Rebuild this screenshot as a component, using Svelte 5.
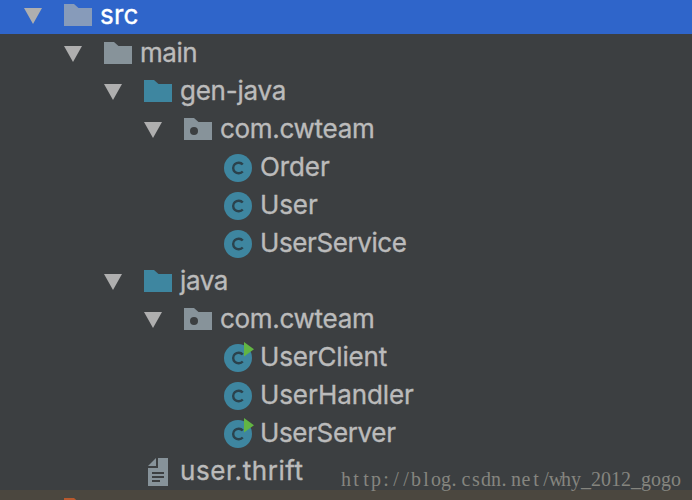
<script>
  const rows = [
    { label: 'src', depth: 0, icon: 'folder', tone: 'selected', open: true, tracking: 0.2 },
    { label: 'main', depth: 1, icon: 'folder', tone: 'plain', open: true, tracking: -0.5 },
    { label: 'gen-java', depth: 2, icon: 'folder', tone: 'source', open: true, tracking: -0.25 },
    { label: 'com.cwteam', depth: 3, icon: 'package', tone: 'plain', open: true, tracking: -0.3 },
    { label: 'Order', depth: 4, icon: 'class', tracking: -0.1 },
    { label: 'User', depth: 4, icon: 'class', tracking: -0.1 },
    { label: 'UserService', depth: 4, icon: 'class', tracking: -0.4 },
    { label: 'java', depth: 2, icon: 'folder', tone: 'source', open: true, tracking: -0.4 },
    { label: 'com.cwteam', depth: 3, icon: 'package', tone: 'plain', open: true, tracking: -0.3 },
    { label: 'UserClient', depth: 4, icon: 'class', runnable: true, tracking: -0.15 },
    { label: 'UserHandler', depth: 4, icon: 'class', tracking: -0.1 },
    { label: 'UserServer', depth: 4, icon: 'class', runnable: true, tracking: -0.35 },
    { label: 'user.thrift', depth: 2, icon: 'file', tracking: 0.55 },
    { label: '', depth: 0, icon: 'folder', tone: 'excluded' }
  ];

  const url = 'http://blog.csdn.net/why_2012_gogo';
  // one 10px cell per character, dots sit at the left of their cell
  const cells = Array.from(url, (c, i) => (c === '.' ? 3 : 5) + i * 10).join(' ');
</script>

<div class="tree">
  {#each rows as row}
    <div
      class="row"
      class:selected={row.tone === 'selected'}
      class:excluded={row.tone === 'excluded'}
      style="padding-left: {24 + row.depth * 40}px"
    >
      <span class="toggle">
        {#if row.open}
          <svg width="18" height="16" viewBox="0 0 18 16"><path d="M0 0H18L9 16Z" fill="#afafaf" /></svg>
        {/if}
      </span>
      <svg class="icon {row.tone}" width="32" height="38" viewBox="0 0 32 38">
        {#if row.icon === 'folder' || row.icon === 'package'}
          <path d="M0 8H10L14.5 12H28V30H0Z" fill="currentColor" />
          {#if row.icon === 'package'}
            <circle cx="10" cy="21" r="4" fill="#3c3f41" />
          {/if}
        {:else if row.icon === 'class'}
          <circle cx="14" cy="20" r="14" fill="#3e86a0" />
          <path d="M18.8 16.5A5.5 5.3 0 1 0 18.8 23.5" fill="none" stroke="#2b424c" stroke-width="2.4" />
          {#if row.runnable}
            <path d="M20 4L30 11.2L20 18.4Z" fill="#62b543" />
          {/if}
        {:else}
          <path d="M12 6V14H4ZM14 6H24V34H4V16H14Z" fill="#87939a" />
          <path d="M8 21H20M8 25H20M8 29H16" stroke="#3c3f41" stroke-width="2" />
        {/if}
      </svg>
      <span class="label" style="letter-spacing: {row.tracking}px">{row.label}</span>
    </div>
  {/each}

  <svg class="watermark" width="346" height="28">
    <text x={cells} y="18">{url}</text>
  </svg>
</div>

<style>
  :global(body) {
    background: #3c3f41;
    overflow: hidden;
  }
  .tree {
    position: relative;
    width: 692px;
    height: 500px;
    overflow: hidden;
    background: #3c3f41;
    color: #bbbbbb;
    font-family: Inter, sans-serif;
    font-size: 26px;
    -webkit-text-stroke: 0.35px currentColor;
  }
  .row {
    display: flex;
    align-items: center;
    height: 38px;
    box-sizing: border-box;
    white-space: nowrap;
  }
  .row:first-child {
    margin-top: -4px;
  }
  .row.selected {
    background: #2f65ca;
    color: #ffffff;
  }
  .row.excluded {
    background: #4b473f;
  }
  .toggle {
    display: flex;
    flex: none;
    width: 40px;
    padding-top: 2px;
  }
  .icon {
    flex: none;
    margin-right: 4px;
  }
  .icon.plain {
    color: #87939a;
  }
  .icon.source {
    color: #3e86a0;
  }
  .icon.selected {
    color: #879bba;
  }
  .icon.excluded {
    color: #b9592d;
  }
  .label {
    line-height: 38px;
  }
  .watermark {
    position: absolute;
    left: 341px;
    top: 468px;
    fill: #85857f;
    font-family: "Liberation Serif", serif;
    font-size: 20px;
    text-anchor: middle;
    -webkit-text-stroke: 0;
  }
</style>
